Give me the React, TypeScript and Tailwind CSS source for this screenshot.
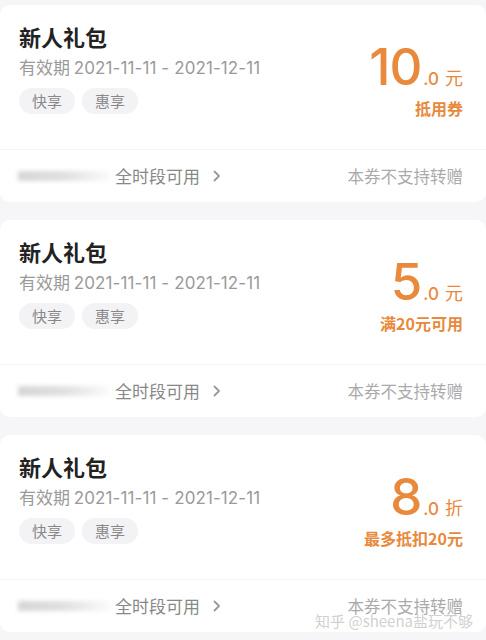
import React from "react";

const coupons = [
  { big: "10", small: ".0", unit: "元", note: "抵用券" },
  { big: "5", small: ".0", unit: "元", note: "满20元可用" },
  { big: "8", small: ".0", unit: "折", note: "最多抵扣20元" },
];

const Card = ({ c }: { c: (typeof coupons)[number] }) => {
  return (
    <div className="bg-white rounded-[10px] h-[197px] flex flex-col">
      <div className="h-[144px] pl-[19px] pr-[23px] pt-[16px] flex justify-between">
        <div className="flex flex-col">
          <div className="text-[22px] leading-[30px] font-bold text-[#222]">新人礼包</div>
          <div className="mt-[4px] text-[17px] leading-[24px] text-[#9a9a9a]">
            有效期{" "}
            <span className="font-['Inter',sans-serif] text-[17px] tracking-[0.1px]">2021-11-11 - 2021-12-11</span>
          </div>
          <div className="mt-[8px] flex gap-[7px]">
            <span className="h-[26px] px-[13px] rounded-full bg-[#f3f3f5] text-[15px] leading-[26px] text-[#888]">
              快享
            </span>
            <span className="h-[26px] px-[13px] rounded-full bg-[#f3f3f5] text-[15px] leading-[26px] text-[#888]">
              惠享
            </span>
          </div>
        </div>
        <div className="flex flex-col items-end pt-[20px] text-[#e8893b]">
          <div className="flex items-baseline leading-none">
            <span className="text-[51px] font-medium font-['Inter',sans-serif] tracking-[-1px]">{c.big}</span>
            <span className="ml-[2px] text-[17px] font-medium font-['Inter',sans-serif]">{c.small}</span>
            <span className="ml-[6px] text-[18px]">{c.unit}</span>
          </div>
          <div className="mt-[6px] text-[16px] leading-[20px] font-bold">{c.note}</div>
        </div>
      </div>
      <div className="flex-1 border-t border-[#f3f3f3] pl-[18px] pr-[23px] flex items-center justify-between">
        <div className="flex items-center">
          <div className="w-[92px] h-[10px] bg-gradient-to-r from-[#d6d6d6] via-[#e0e0e0] to-[#fbfbfb] blur-[2px]" />
          <span className="ml-[5px] text-[17px] text-[#888]">全时段可用</span>
          <svg className="ml-[12px]" width="9" height="14" viewBox="0 0 9 14" fill="none">
            <path d="M2.5 2.5l4.5 4.5-4.5 4.5" stroke="#999" strokeWidth="1.8" strokeLinecap="round" strokeLinejoin="round" />
          </svg>
        </div>
        <span className="text-[16.5px] text-[#aaa]">本券不支持转赠</span>
      </div>
    </div>
  );
};

export default function App() {
  return (
    <div
      className="relative w-[486px] h-[640px] overflow-hidden bg-[#f6f6f8] pt-[5px] flex flex-col gap-[18px]"
      style={{ fontFamily: '"Noto Sans CJK SC", "Noto Sans", sans-serif' }}
    >
      {coupons.map((c, i) => (
        <Card key={i} c={c} />
      ))}
      <div className="absolute right-[13px] top-[611px] text-[15px] leading-[20px] text-[#c4c4c4]/80">
        知乎 @sheena盐玩不够
      </div>
    </div>
  );
}
